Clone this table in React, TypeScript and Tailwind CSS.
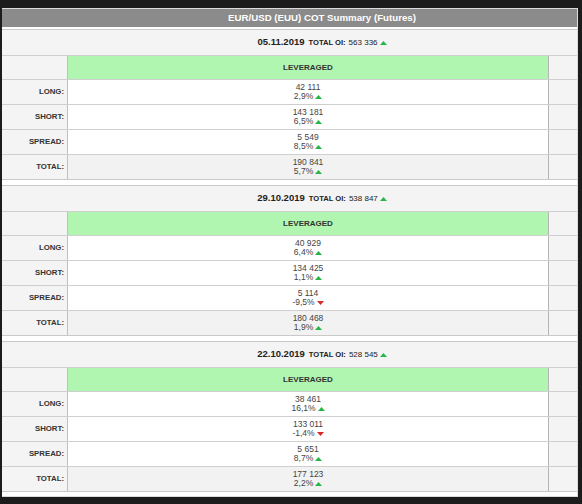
type Row = { label: string; value: string; pct: string; up: boolean };
type Block = { date: string; oi: string; oiUp: boolean; rows: Row[] };

const blocks: Block[] = [
  {
    date: "05.11.2019",
    oi: "563 336",
    oiUp: true,
    rows: [
      { label: "LONG:", value: "42 111", pct: "2,9%", up: true },
      { label: "SHORT:", value: "143 181", pct: "6,5%", up: true },
      { label: "SPREAD:", value: "5 549", pct: "8,5%", up: true },
      { label: "TOTAL:", value: "190 841", pct: "5,7%", up: true },
    ],
  },
  {
    date: "29.10.2019",
    oi: "538 847",
    oiUp: true,
    rows: [
      { label: "LONG:", value: "40 929", pct: "6,4%", up: true },
      { label: "SHORT:", value: "134 425", pct: "1,1%", up: true },
      { label: "SPREAD:", value: "5 114", pct: "-9,5%", up: false },
      { label: "TOTAL:", value: "180 468", pct: "1,9%", up: true },
    ],
  },
  {
    date: "22.10.2019",
    oi: "528 545",
    oiUp: true,
    rows: [
      { label: "LONG:", value: "38 461", pct: "16,1%", up: true },
      { label: "SHORT:", value: "133 011", pct: "-1,4%", up: false },
      { label: "SPREAD:", value: "5 651", pct: "8,7%", up: true },
      { label: "TOTAL:", value: "177 123", pct: "2,2%", up: true },
    ],
  },
];

const Arrow = ({ up }: { up: boolean }) => (
  <svg width="7" height="4" viewBox="0 0 7 4" className="ml-[2px] inline-block">
    <path
      d={up ? "M0 4 L3.5 0 L7 4 Z" : "M0 0 L7 0 L3.5 4 Z"}
      fill={up ? "#27b545" : "#d62a2a"}
    />
  </svg>
);

const SummaryBlock = ({ block }: { block: Block }) => (
  <div className="border-y border-[#c9c9c9]">
    <div className="h-[26px] flex items-center justify-center pl-[65px] bg-[#f4f4f4] border-b border-[#cfcfcf] text-[#222]">
      <span className="text-[9.5px] font-bold">{block.date}</span>
      <span className="ml-[4px] text-[7.6px] font-bold">TOTAL OI:</span>
      <span className="ml-[3px] text-[8px]">{block.oi}</span>
      <Arrow up={block.oiUp} />
    </div>
    <div className="flex h-[24px] border-b border-[#cfcfcf]">
      <div className="w-[66px] bg-[#f4f4f4] border-r border-[#bfbfbf]" />
      <div className="w-[481px] bg-[#b0f6b0] border-r border-[#b5b5b5] flex items-center justify-center text-[8px] font-bold text-[#333]">
        LEVERAGED
      </div>
      <div className="flex-1 bg-[#f4f4f4]" />
    </div>
    {block.rows.map((row, i) => (
      <div
        key={row.label}
        className={
          i < block.rows.length - 1
            ? "flex h-[25px] border-b border-[#cfcfcf]"
            : "flex h-[24px]"
        }
      >
        <div className="w-[66px] bg-[#f4f4f4] border-r border-[#bfbfbf] flex items-center justify-end pr-[3px] text-[7.8px] font-bold text-[#333]">
          {row.label}
        </div>
        <div
          className={
            row.label === "TOTAL:"
              ? "w-[481px] bg-[#f2f2f2] border-r border-[#b5b5b5] flex flex-col items-center justify-center text-[8.5px] leading-[9px] text-[#444]"
              : "w-[481px] bg-white border-r border-[#b5b5b5] flex flex-col items-center justify-center text-[8.5px] leading-[9px] text-[#444]"
          }
        >
          <span>{row.value}</span>
          <span className="flex items-center">
            {row.pct}
            <Arrow up={row.up} />
          </span>
        </div>
        <div className="flex-1 bg-[#f4f4f4]" />
      </div>
    ))}
  </div>
);

const App = () => {
  return (
    <div className="min-h-screen bg-[#1c1c1c] pt-[8px] pl-[2px] font-['Liberation_Sans',Arial,sans-serif]">
      <div className="w-[576px] bg-white border-t border-r border-b border-[#dcdcdc]">
        <div className="h-[18px] bg-[#8b8b8b] flex items-center justify-center pl-[65px] text-white text-[9.7px] font-bold">
          EUR/USD (EUU) COT Summary (Futures)
        </div>
        <div className="mt-[2px] mb-[4px] flex flex-col gap-[5px]">
          {blocks.map((b) => (
            <SummaryBlock key={b.date} block={b} />
          ))}
        </div>
      </div>
    </div>
  );
};

export default App;
